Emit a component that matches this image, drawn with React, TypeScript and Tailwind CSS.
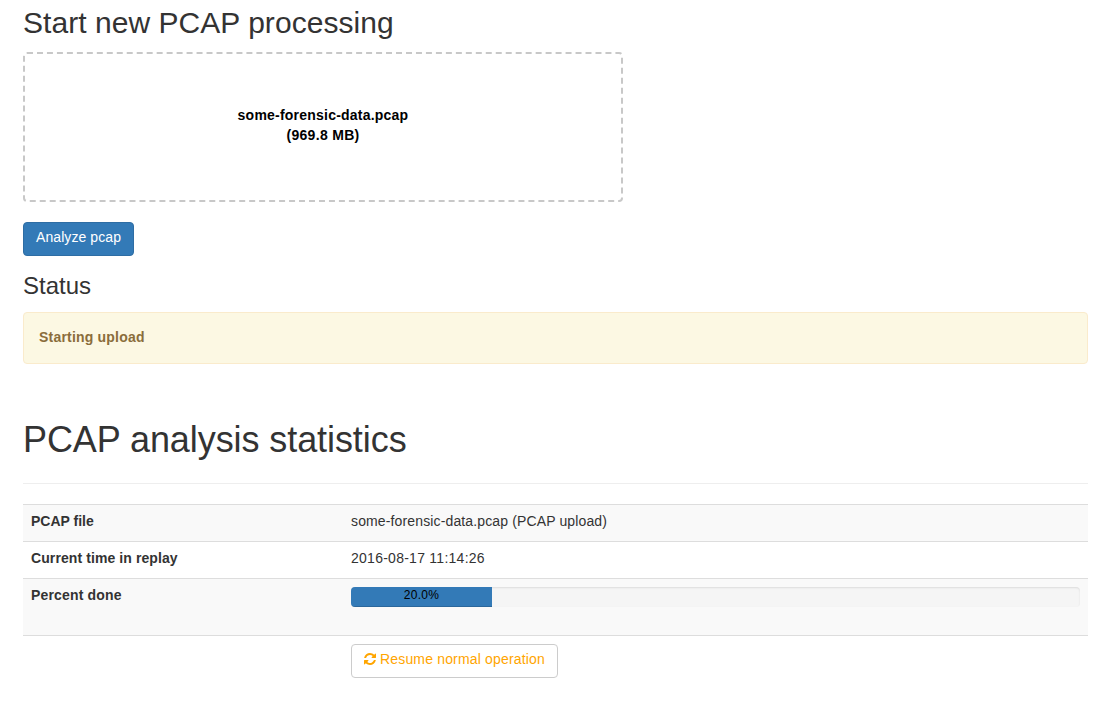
import React from "react";

const font = "font-['Liberation_Sans',Arial,sans-serif]";

// fa-refresh from Font Awesome 4
const RefreshIcon = () => (
  <svg viewBox="128 128 1536 1536" className="h-3 w-3 fill-current">
    <path d="M1639 1056q0 5-1 7-64 268-268 434.500t-478 166.500q-146 0-282.500-55t-243.500-157l-129 129q-19 19-45 19t-45-19-19-45v-448q0-26 19-45t45-19h448q26 0 45 19t19 45-19 45l-137 137q71 66 161 102t187 36q134 0 250-65t186-179q11-17 53-117 8-23 30-23h192q13 0 22.500 9.500t9.500 22.500zm25-800v448q0 26-19 45t-45 19h-448q-26 0-45-19t-19-45 19-45l138-138q-148-137-349-137-134 0-250 65t-186 179q-11 17-53 117-8 23-30 23h-199q-13 0-22.500-9.500t-9.500-22.500v-7q65-268 270-434.500t480-166.500q146 0 284 55.500t245 156.500l130-129q19-19 45-19t45 19 19 45z" />
  </svg>
);

export default function App() {
  return (
    <div className={`${font} min-h-[712px] w-[1100px] overflow-hidden bg-white pt-[6px] pr-[12px] pl-[23px] text-[14px] leading-5 text-[#333]`}>
      <h2 className="text-[30px] leading-[33px] font-medium tracking-[0.04px]">Start new PCAP processing</h2>

      <div className="mt-[13px] h-[150px] w-[600px] rounded-[4px] border-2 border-dashed border-[#c8c8c8] pt-[51px] text-center font-bold text-black">
        <div className="tracking-[0.22px]">some-forensic-data.pcap</div>
        <div className="tracking-[0.3px]">(969.8 MB)</div>
      </div>

      <button className="mt-5 block h-[34px] rounded-[4px] border border-[#2e6da4] bg-[#337ab7] px-3 pb-1 tracking-[0.08px] text-white">
        Analyze pcap
      </button>

      <h3 className="mt-[17px] text-[24px] leading-[26px] font-medium">Status</h3>

      <div className="mt-[13px] rounded-[4px] border border-[#faebcc] bg-[#fcf8e3] px-[15px] pt-[14px] pb-4 font-bold tracking-[0.2px] text-[#8a6d3b]">
        Starting upload
      </div>

      <h1 className="mt-[56px] text-[36px] leading-10 font-medium tracking-[-0.08px]">PCAP analysis statistics</h1>
      <hr className="mt-[23px] mb-5 border-t border-[#eee]" />

      <table className="w-full table-fixed border-collapse">
        <colgroup>
          <col className="w-[320px]" />
          <col />
        </colgroup>
        <tbody>
          <tr className="border-t border-[#ddd] bg-[#f9f9f9]">
            <td className="px-2 pt-[6px] pb-[10px] align-top font-bold">PCAP file</td>
            <td className="px-2 pt-[6px] pb-[10px] align-top tracking-[0.135px]">some-forensic-data.pcap (PCAP upload)</td>
          </tr>
          <tr className="border-t border-[#ddd]">
            <td className="px-2 pt-[6px] pb-[10px] align-top font-bold tracking-[0.09px]">Current time in replay</td>
            <td className="px-2 pt-[6px] pb-[10px] align-top tracking-[0.26px]">2016-08-17 11:14:26</td>
          </tr>
          <tr className="border-t border-[#ddd] bg-[#f9f9f9]">
            <td className="px-2 pt-[6px] pb-[10px] align-top font-bold tracking-[0.16px]">Percent done</td>
            <td className="p-2 align-top">
              <div className="mb-5 h-5 overflow-hidden rounded-[4px] bg-[#f5f5f5] shadow-[inset_0_1px_2px_rgba(0,0,0,0.1)]">
                <div className="h-full w-[141px] bg-[#337ab7] text-center text-[12px] leading-[17px] tracking-[0.3px] text-black shadow-[inset_0_-1px_0_rgba(0,0,0,0.15)]">
                  20.0%
                </div>
              </div>
            </td>
          </tr>
          <tr className="border-t border-[#ddd]">
            <td className="p-2"></td>
            <td className="p-2">
              <button className="flex h-[34px] items-center gap-1 rounded-[4px] border border-[#ccc] bg-white px-3 pb-1 tracking-[0.17px] text-[#ffa500]">
                <RefreshIcon />
                Resume normal operation
              </button>
            </td>
          </tr>
        </tbody>
      </table>
    </div>
  );
}
